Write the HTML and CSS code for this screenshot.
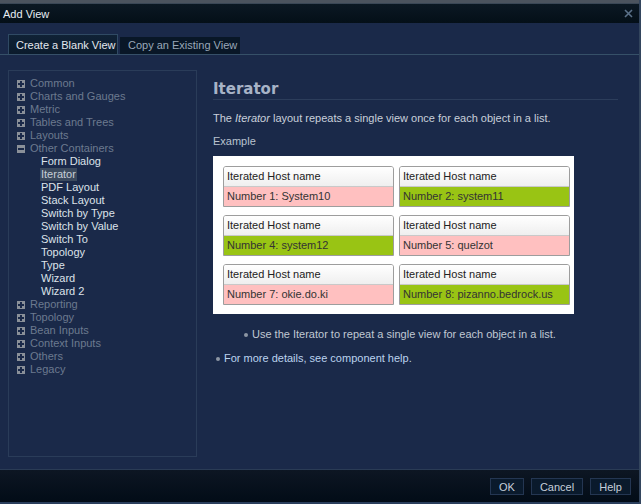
FILE: index.html
```html
<!DOCTYPE html>
<html>
<head>
<meta charset="utf-8">
<link rel="stylesheet" href="styles.css">
</head>
<body>
<div class="window">
  <div class="behind"></div>
  <div class="titlebar">
    <span class="title">Add View</span>
    <svg class="close" width="9" height="9" viewBox="0 0 9 9"><path d="M1 1L8 8M8 1L1 8" stroke="#5b7189" stroke-width="1.6" fill="none"/></svg>
  </div>
  <div class="tabs">
    <div class="tab active">Create a Blank View</div>
    <div class="tab">Copy an Existing View</div>
  </div>
  <div class="main">
    <div class="tree">
      <div class="row cat"><span class="box plus"></span>Common</div>
      <div class="row cat"><span class="box plus"></span>Charts and Gauges</div>
      <div class="row cat"><span class="box plus"></span>Metric</div>
      <div class="row cat"><span class="box plus"></span>Tables and Trees</div>
      <div class="row cat"><span class="box plus"></span>Layouts</div>
      <div class="row cat"><span class="box minus"></span>Other Containers</div>
      <div class="row child">Form Dialog</div>
      <div class="row child"><span class="sel">Iterator</span></div>
      <div class="row child">PDF Layout</div>
      <div class="row child">Stack Layout</div>
      <div class="row child">Switch by Type</div>
      <div class="row child">Switch by Value</div>
      <div class="row child">Switch To</div>
      <div class="row child">Topology</div>
      <div class="row child">Type</div>
      <div class="row child">Wizard</div>
      <div class="row child">Wizard 2</div>
      <div class="row cat"><span class="box plus"></span>Reporting</div>
      <div class="row cat"><span class="box plus"></span>Topology</div>
      <div class="row cat"><span class="box plus"></span>Bean Inputs</div>
      <div class="row cat"><span class="box plus"></span>Context Inputs</div>
      <div class="row cat"><span class="box plus"></span>Others</div>
      <div class="row cat"><span class="box plus"></span>Legacy</div>
    </div>
    <div class="detail">
      <h1 class="heading">Iterator</h1>
      <p class="desc">The <i>Iterator</i> layout repeats a single view once for each object in a list.</p>
      <p class="label">Example</p>
      <div class="example">
        <div class="card"><div class="chead">Iterated Host name</div><div class="cval pink">Number 1: System10</div></div>
        <div class="card"><div class="chead">Iterated Host name</div><div class="cval green">Number 2: system11</div></div>
        <div class="card"><div class="chead">Iterated Host name</div><div class="cval green">Number 4: system12</div></div>
        <div class="card"><div class="chead">Iterated Host name</div><div class="cval pink">Number 5: quelzot</div></div>
        <div class="card"><div class="chead">Iterated Host name</div><div class="cval pink">Number 7: okie.do.ki</div></div>
        <div class="card"><div class="chead">Iterated Host name</div><div class="cval green">Number 8: pizanno.bedrock.us</div></div>
      </div>
      <div class="bullet inner"><span class="dot"></span>Use the Iterator to repeat a single view for each object in a list.</div>
      <div class="bullet link"><span class="dot"></span>For more details, see component help.</div>
    </div>
  </div>
  <div class="footer">
    <button class="btn ok">OK</button>
    <button class="btn cancel">Cancel</button>
    <button class="btn help">Help</button>
  </div>
</div>
</body>
</html>
```
FILE: styles.css
```css
html, body {
  margin: 0;
  padding: 0;
  background: #4b535e;
}
body {
  font-family: "Liberation Sans", Arial, sans-serif;
  font-size: 11px;
}
.window {
  width: 639px;
  height: 504px;
  display: flex;
  flex-direction: column;
  background: #1a2949;
  border-right: 2px solid #33455d;
  box-sizing: content-box;
}
.behind {
  height: 3px;
  background: #4b535e;
}
.titlebar {
  height: 19px;
  border-top: 1px solid #3a4756;
  background: linear-gradient(#0b1823, #040f18);
  display: flex;
  align-items: center;
  justify-content: space-between;
  padding: 0 6px 0 3px;
}
.title {
  color: #e6ecf2;
  font-size: 11px;
}
.close {
  display: block;
}
.tabs {
  height: 31px;
  display: flex;
  align-items: flex-end;
  padding-left: 8px;
  gap: 2px;
  border-bottom: 1px solid #365068;
}
.tab {
  box-sizing: border-box;
  height: 17px;
  width: 120px;
  padding-left: 8px;
  line-height: 17px;
  color: #9aa8b8;
  background: #091727;
}
.tab.active {
  height: 20px;
  width: 110px;
  line-height: 20px;
  color: #e2e8ef;
  background: linear-gradient(#102236, #0b1b2c);
  border: 1px solid #304a64;
  border-bottom: none;
  padding-left: 7px;
}
.main {
  flex: 1;
  display: flex;
  padding: 15px 21px 0 8px;
  gap: 16px;
  border-bottom: 1px solid #2a3b55;
}
.tree {
  box-sizing: border-box;
  width: 189px;
  height: 387px;
  border: 1px solid #2a3c59;
  padding: 6px 0 0 8px;
}
.row {
  height: 13px;
  line-height: 13px;
  display: flex;
  align-items: center;
  white-space: nowrap;
}
.cat {
  color: #6c7a8f;
}
.child {
  color: #dde3ea;
  padding-left: 24px;
}
.sel {
  background: #3b4a5e;
  color: #c7ced8;
  padding: 0 1px;
  margin-left: -1px;
}
.box {
  position: relative;
  width: 8px;
  height: 8px;
  background: #8a9099;
  margin-right: 5px;
  flex: none;
}
.box::before {
  content: "";
  position: absolute;
  left: 1px;
  top: 3px;
  width: 6px;
  height: 2px;
  background: #1a2949;
}
.plus::after {
  content: "";
  position: absolute;
  left: 3px;
  top: 1px;
  width: 2px;
  height: 6px;
  background: #1a2949;
}
.detail {
  flex: 1;
  padding-top: 10px;
}
.heading {
  margin: 0;
  font-family: "DejaVu Sans", Verdana, sans-serif;
  font-weight: bold;
  font-size: 15px;
  line-height: 19px;
  color: #a7b3c7;
  border-bottom: 1px solid #2c3d5b;
}
.desc {
  margin: 12px 0 0;
  line-height: 13px;
  color: #c9d0db;
}
.label {
  margin: 10px 0 0;
  line-height: 13px;
  color: #b9c2cf;
}
.example {
  margin-top: 8px;
  width: 361px;
  box-sizing: border-box;
  background: #fff;
  padding: 10px 3px 9px 10px;
  display: grid;
  grid-template-columns: 171px 171px;
  column-gap: 5px;
  row-gap: 8px;
}
.card {
  border: 1px solid #9d9d9d;
  border-radius: 3px 3px 0 0;
  overflow: hidden;
}
.chead {
  height: 19px;
  line-height: 19px;
  padding-left: 3px;
  color: #222;
  background: linear-gradient(#ffffff, #efefef);
  border-bottom: 1px solid #c9c9c9;
}
.cval {
  height: 19px;
  line-height: 19px;
  padding-left: 3px;
  color: #333;
}
.pink { background: #ffc0c0; }
.green { background: #99c414; }
.bullet {
  display: flex;
  align-items: center;
  line-height: 13px;
  white-space: nowrap;
}
.dot {
  width: 4px;
  height: 4px;
  border-radius: 50%;
  background: #8d96a4;
  margin-right: 4px;
}
.bullet.inner {
  margin-top: 14px;
  padding-left: 31px;
  color: #c0c8d3;
}
.bullet.link {
  margin-top: 11px;
  padding-left: 3px;
  color: #bcd3ef;
}
.footer {
  flex: none;
  height: 34px;
  background: linear-gradient(#0d1623, #020c17);
  border-bottom: 2px solid #2a3e5c;
  display: flex;
  justify-content: flex-end;
  align-items: flex-start;
  padding: 8px 8px 0 0;
  gap: 7px;
  box-sizing: border-box;
}
.btn {
  height: 17px;
  padding: 0;
  font-family: "Liberation Sans", Arial, sans-serif;
  font-size: 11px;
  color: #c6cfda;
  background: #0a1a2c;
  border: 1px solid #243652;
}
.ok { width: 34px; }
.cancel { width: 52px; }
.help { width: 41px; }
```
